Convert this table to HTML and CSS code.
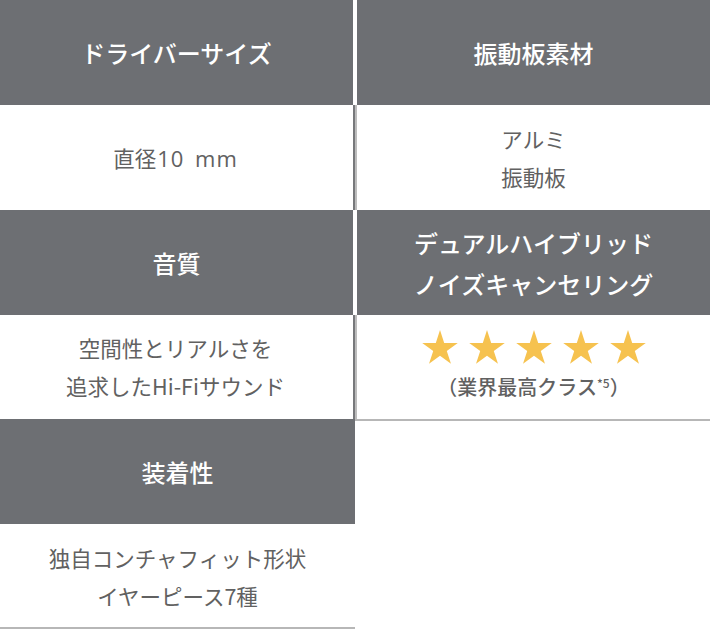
FILE: index.html
```html
<!DOCTYPE html>
<html lang="ja">
<head>
<meta charset="utf-8">
<title>スペック</title>
<link rel="stylesheet" href="styles.css">
</head>
<body>
<div class="spec">
  <div class="head head-l">ドライバーサイズ</div>
  <div class="head head-r">振動板素材</div>
  <div class="cell cell-l">
    <div>直径<span class="num">10 mm</span></div>
  </div>
  <div class="cell cell-r">アルミ<br>振動板</div>
  <div class="head head-l">音質</div>
  <div class="head head-r">デュアルハイブリッド<br>ノイズキャンセリング</div>
  <div class="cell cell-l">空間性とリアルさを<br>追求したHi-Fiサウンド</div>
  <div class="cell cell-r">
    <div class="stars">
      <svg class="star" viewBox="2 0 96 91"><polygon points="50,0 61.23,34.55 97.55,34.55 68.16,55.9 79.39,90.45 50,69.1 20.61,90.45 31.84,55.9 2.45,34.55 38.77,34.55"/></svg>
      <svg class="star" viewBox="2 0 96 91"><polygon points="50,0 61.23,34.55 97.55,34.55 68.16,55.9 79.39,90.45 50,69.1 20.61,90.45 31.84,55.9 2.45,34.55 38.77,34.55"/></svg>
      <svg class="star" viewBox="2 0 96 91"><polygon points="50,0 61.23,34.55 97.55,34.55 68.16,55.9 79.39,90.45 50,69.1 20.61,90.45 31.84,55.9 2.45,34.55 38.77,34.55"/></svg>
      <svg class="star" viewBox="2 0 96 91"><polygon points="50,0 61.23,34.55 97.55,34.55 68.16,55.9 79.39,90.45 50,69.1 20.61,90.45 31.84,55.9 2.45,34.55 38.77,34.55"/></svg>
      <svg class="star" viewBox="2 0 96 91"><polygon points="50,0 61.23,34.55 97.55,34.55 68.16,55.9 79.39,90.45 50,69.1 20.61,90.45 31.84,55.9 2.45,34.55 38.77,34.55"/></svg>
    </div>
    <div class="note">（業界最高クラス<sup>*5</sup>）</div>
  </div>
  <div class="head head-full">装着性</div>
  <div class="blank"></div>
  <div class="cell cell-last">独自コンチャフィット形状<br>イヤーピース7種</div>
</div>
</body>
</html>
```

FILE: styles.css
```css
html, body {
  margin: 0;
  padding: 0;
  background: #ffffff;
}

body {
  font-family: "Noto Sans CJK JP", "Noto Sans", sans-serif;
}

.spec {
  display: grid;
  grid-template-columns: 355px 355px;
  grid-template-rows: 105px 105px 105px 104px 105px 105px;
  width: 710px;
}

.head {
  background: #6d6f73;
  color: #ffffff;
  font-size: 24px;
  font-weight: 500;
  line-height: 41px;
  display: flex;
  align-items: center;
  justify-content: center;
  text-align: center;
}

.head-l {
  margin-right: 2px;
}

.head-r {
  margin-left: 2px;
}

.cell {
  color: #616161;
  font-size: 21.5px;
  line-height: 38px;
  display: flex;
  flex-direction: column;
  align-items: center;
  justify-content: center;
  text-align: center;
}

.num {
  font-family: "Open Sans", "Noto Sans CJK JP", sans-serif;
  font-size: 22px;
  letter-spacing: 1px;
  word-spacing: 4px;
  margin-left: 1px;
}

.cell-l {
  border-right: 2px solid #77787b;
  padding-right: 2px;
}

.cell-r {
  border-left: 2px solid #bcbcbc;
}

.blank {
  grid-row: 5 / 7;
  grid-column: 2;
  border-top: 2px solid #b7b7b7;
}

.head-full {
  grid-column: 1;
}

.cell-last {
  grid-column: 1;
  border-bottom: 2px solid #b7b7b7;
  padding-top: 2px;
}

.stars {
  display: flex;
  gap: 11px;
  margin-bottom: 10px;
  margin-top: -4px;
}

.star {
  width: 36px;
  height: 34px;
  fill: #f6c24f;
}

.note {
  font-size: 20px;
  line-height: 26px;
  color: #616161;
  font-weight: 500;
}

.note sup {
  font-size: 12px;
  vertical-align: 7px;
  line-height: 0;
}
```
